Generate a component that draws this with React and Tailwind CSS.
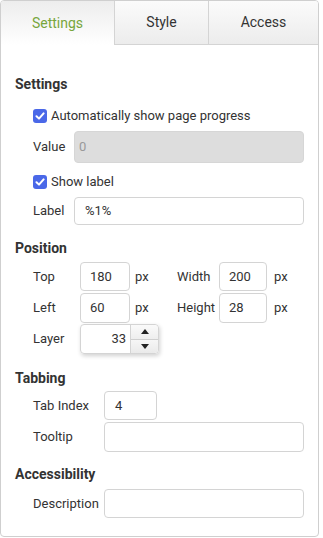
import React from "react";

const font = { fontFamily: "Roboto, 'Liberation Sans', sans-serif" };

function Check({ label }) {
  return (
    <div className="flex items-center h-5 pl-[32px]">
      <span className="w-[14px] h-[14px] rounded-[3px] bg-[#4a68e8] flex items-center justify-center">
        <svg width="10" height="10" viewBox="0 0 10 10">
          <path d="M1.5 5.2 L4 7.6 L8.6 2.4" stroke="white" strokeWidth="2" fill="none" strokeLinecap="round" strokeLinejoin="round" />
        </svg>
      </span>
      <span className="ml-[4px] text-[13px] text-[#333]">{label}</span>
    </div>
  );
}

function Heading({ children, mt }) {
  return <div className={`h-5 leading-5 pl-[14px] text-[14px] font-bold text-[#333] ${mt}`}>{children}</div>;
}

export default function App() {
  return (
    <div className="w-[323px] h-[538px] bg-white" style={font}>
      <div className="w-[319px] h-[537px] border border-[#cfcfcf] rounded-[4px] overflow-hidden flex flex-col">
        <div className="flex h-[44px] text-[14px]">
          <div className="w-[114px] h-[44px] flex items-center justify-center text-[#77a63c] bg-gradient-to-b from-[#ededed] to-[#ffffff] border-r border-[#d4d4d4]">Settings</div>
          <div className="w-[94px] h-[44px] flex items-center justify-center text-[#333] bg-gradient-to-b from-[#fbfbfb] to-[#ececec] border-r border-b border-[#d4d4d4]">Style</div>
          <div className="flex-1 h-[44px] flex items-center justify-center text-[#333] bg-gradient-to-b from-[#fbfbfb] to-[#ececec] border-b border-[#d4d4d4]">Access</div>
        </div>

        <Heading mt="mt-[29px]">Settings</Heading>
        <div className="mt-[12px]"><Check label="Automatically show page progress" /></div>
        <div className="mt-[5px] flex items-center h-[32px] pl-[32px] text-[13px] text-[#333]">
          <span className="w-[41px]">Value</span>
          <div className="w-[230px] h-[32px] rounded-[4px] bg-[#dddddd] border border-[#d6d6d6] flex items-center pl-[4px] text-[#999]">0</div>
        </div>
        <div className="mt-[9px]"><Check label="Show label" /></div>
        <div className="mt-[5px] flex items-center h-[28px] pl-[32px] text-[13px] text-[#333]">
          <span className="w-[41px]">Label</span>
          <div className="w-[230px] h-[28px] rounded-[4px] bg-white border border-[#d4d4d4] flex items-center pl-[10px]">%1%</div>
        </div>

        <Heading mt="mt-[13px]">Position</Heading>
        <div className="mt-[4px] flex items-center h-[29px] pl-[32px] text-[13px] text-[#333]">
          <span className="w-[47px]">Top</span>
          <div className="w-[50px] h-[29px] rounded-[4px] border border-[#d4d4d4] flex items-center pl-[9px]">180</div>
          <span className="ml-[5px] w-[42px]">px</span>
          <span className="w-[42px]">Width</span>
          <div className="w-[48px] h-[29px] rounded-[4px] border border-[#d4d4d4] flex items-center pl-[9px]">200</div>
          <span className="ml-[7px]">px</span>
        </div>
        <div className="mt-[2px] flex items-center h-[30px] pl-[32px] text-[13px] text-[#333]">
          <span className="w-[47px]">Left</span>
          <div className="w-[50px] h-[30px] rounded-[4px] border border-[#d4d4d4] flex items-center pl-[9px]">60</div>
          <span className="ml-[5px] w-[42px]">px</span>
          <span className="w-[42px]">Height</span>
          <div className="w-[48px] h-[30px] rounded-[4px] border border-[#d4d4d4] flex items-center pl-[9px]">28</div>
          <span className="ml-[7px]">px</span>
        </div>
        <div className="mt-[1px] flex items-center h-[30px] pl-[32px] text-[13px] text-[#333]">
          <span className="w-[47px]">Layer</span>
          <div className="w-[79px] h-[30px] rounded-[4px] border border-[#d4d4d4] flex shadow-[1px_2px_4px_rgba(0,0,0,0.18)]">
            <div className="w-[49px] flex items-center justify-end pr-[4px]">33</div>
            <div className="flex-1 flex flex-col border-l border-[#d4d4d4] rounded-r-[4px] overflow-hidden">
              <div className="flex-1 flex items-center justify-center bg-gradient-to-b from-[#fafafa] to-[#eeeeee] border-b border-[#cfcfcf]">
                <svg width="8" height="5" viewBox="0 0 8 5"><path d="M0 5 L4 0 L8 5 Z" fill="#222" /></svg>
              </div>
              <div className="flex-1 flex items-center justify-center bg-gradient-to-b from-[#f6f6f6] to-[#eaeaea]">
                <svg width="8" height="5" viewBox="0 0 8 5"><path d="M0 0 L8 0 L4 5 Z" fill="#222" /></svg>
              </div>
            </div>
          </div>
        </div>

        <Heading mt="mt-[14px]">Tabbing</Heading>
        <div className="mt-[3px] flex items-center h-[29px] pl-[32px] text-[13px] text-[#333]">
          <span className="w-[71px]">Tab Index</span>
          <div className="w-[53px] h-[29px] rounded-[4px] border border-[#d4d4d4] flex items-center pl-[10px]">4</div>
        </div>
        <div className="mt-[2px] flex items-center h-[30px] pl-[32px] text-[13px] text-[#333]">
          <span className="w-[71px]">Tooltip</span>
          <div className="w-[200px] h-[30px] rounded-[4px] border border-[#d4d4d4]"></div>
        </div>

        <Heading mt="mt-[12px]">Accessibility</Heading>
        <div className="mt-[5px] flex items-center h-[29px] pl-[32px] text-[13px] text-[#333]">
          <span className="w-[71px]">Description</span>
          <div className="w-[200px] h-[29px] rounded-[4px] border border-[#d4d4d4]"></div>
        </div>
      </div>
    </div>
  );
}
